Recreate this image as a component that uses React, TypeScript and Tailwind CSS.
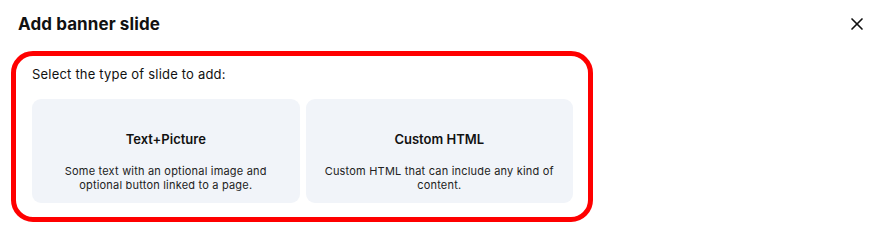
import { X } from 'lucide-react';

const SLIDE_TYPES = [
  {
    title: 'Text+Picture',
    description: 'Some text with an optional image and optional button linked to a page.',
  },
  {
    title: 'Custom HTML',
    description: 'Custom HTML that can include any kind of content.',
  },
];

export default function App() {
  return (
    <div className="w-[883px] h-[243px] bg-white text-[#111] font-['Inter',sans-serif]">
      <div className="flex items-center justify-between pl-[18px] pr-[16px] pt-[13px]">
        <h2 className="text-[17px] leading-[22px] font-bold tracking-[0.1px]">Add banner slide</h2>
        <button className="text-[#111]">
          <X className="h-[20px] w-[20px]" strokeWidth={2} />
        </button>
      </div>

      <div className="ml-[11px] mt-[16px] w-[582px] h-[171px] border-[5px] border-[#ff0000] rounded-[22px] pl-[16px] pr-[15px] pt-[8px]">
        <p className="text-[13px] leading-[20px] tracking-[0.2px]">Select the type of slide to add:</p>
        <div className="grid grid-cols-2 gap-[6px] mt-[15px]">
          {SLIDE_TYPES.map((type) => (
            <div
              key={type.title}
              className="h-[104px] rounded-[9px] bg-[#f1f4f9] pt-[32px] px-[12px] text-center"
            >
              <div className="text-[13px] leading-[16px] font-semibold">{type.title}</div>
              <div className="mt-[17px] text-[11px] leading-[14px] tracking-[0.2px] text-[#222]">
                {type.description}
              </div>
            </div>
          ))}
        </div>
      </div>
    </div>
  );
}
